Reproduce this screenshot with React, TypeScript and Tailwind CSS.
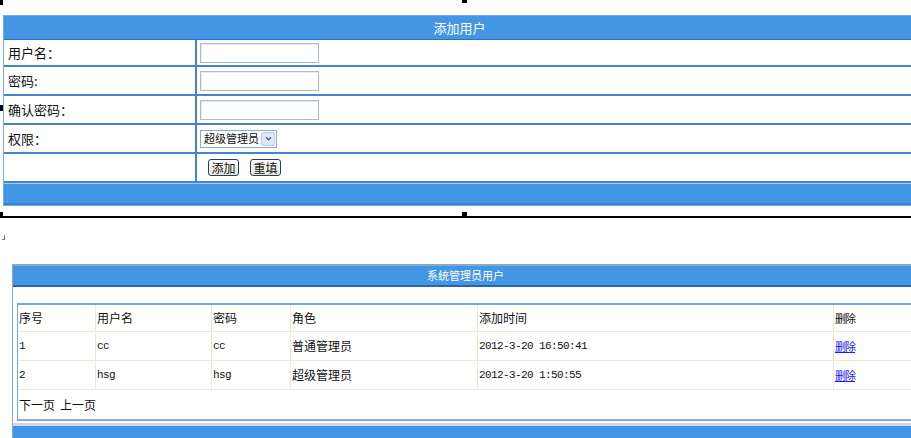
import React from "react";

const cjk = { fontFamily: '"Noto Sans CJK SC", "Noto Sans", sans-serif' };
const mono = { fontFamily: '"Liberation Mono", "Noto Sans CJK SC", monospace' };

function FormRow({ label, h, children }: { label: string; h: string; children?: React.ReactNode }) {
  return (
    <div className={`grid grid-cols-[193px_1fr] border-b-2 border-[#4784ce] ${h}`}>
      <div className="flex items-center border-r-2 border-[#4784ce] pl-[4px] text-[13px] text-[#111]">{label}</div>
      <div className="flex items-center pl-[3px]">{children}</div>
    </div>
  );
}

function TextBox() {
  return <div className="h-[20px] w-[119px] border border-[#a7bbd3] bg-white shadow-[inset_1px_1px_0_#e6ecf3]" />;
}

function Btn({ children }: { children: React.ReactNode }) {
  return (
    <button
      type="button"
      className="flex h-[17px] w-[31px] items-center justify-center rounded-[3px] border border-[#24405f] bg-gradient-to-b from-white to-[#e8e6da] text-[12px] leading-none text-[#111]"
    >
      {children}
    </button>
  );
}

const cols = "grid grid-cols-[78px_116px_79px_187px_356px_1fr]";

function Cell({ children, last, latin }: { children?: React.ReactNode; last?: boolean; latin?: boolean }) {
  return (
    <div
      className={`flex items-center pl-[1px] ${latin ? "text-[11px] tracking-[-0.6px]" : "text-[12px]"} text-[#111] ${last ? "" : "border-r border-[#ece8d8]"}`}
      style={latin ? mono : undefined}
    >
      {children}
    </div>
  );
}

const users = [
  { id: "1", name: "cc", pwd: "cc", role: "普通管理员", time: "2012-3-20 16:50:41" },
  { id: "2", name: "hsg", pwd: "hsg", role: "超级管理员", time: "2012-3-20 1:50:55" },
];

export default function App() {
  return (
    <div className="relative h-[438px] w-[911px] overflow-hidden bg-white" style={cjk}>
      {/* 添加用户 */}
      <div className="pl-[3px] pt-[15px]">
        <div className="w-[913px] border border-[#7aa8e0]">
          <div className="flex h-[24px] items-center justify-center border-b border-[#2f6fbd] bg-[#4396e3] text-[13px] text-white">
            添加用户
          </div>
          <FormRow label="用户名：" h="h-[27px]">
            <TextBox />
          </FormRow>
          <FormRow label="密码:" h="h-[29px]">
            <TextBox />
          </FormRow>
          <FormRow label="确认密码：" h="h-[29px]">
            <TextBox />
          </FormRow>
          <FormRow label="权限：" h="h-[29px]">
            <div className="flex h-[18px] w-[77px] items-center border border-[#8ea9c9] bg-white pl-[3px] pr-[1px]">
              <span className="flex-1 whitespace-nowrap text-[11px] leading-none text-[#111]">超级管理员</span>
              <span className="flex h-[14px] w-[14px] shrink-0 items-center justify-center rounded-[2px] border border-[#b9cbe6] bg-[#dde8f8]">
                <svg viewBox="0 0 8 6" className="h-[5px] w-[7px]">
                  <path d="M1 1.5 4 4.5 7 1.5" fill="none" stroke="#4d6185" strokeWidth="1.6" />
                </svg>
              </span>
            </div>
          </FormRow>
          <FormRow label="" h="h-[29px]">
            <div className="flex gap-[11px] pl-[8px]">
              <Btn>添加</Btn>
              <Btn>重填</Btn>
            </div>
          </FormRow>
          <div className="h-[22px] border-t border-[#a8c8ee] bg-[#4396e3] shadow-[inset_0_-2px_0_#3a82cf]" />
        </div>
      </div>

      {/* 系统管理员用户 */}
      <div className="ml-[12px] mt-[58px] w-[906px] border-l border-t-2 border-[#88a7cc]">
        <div className="flex h-[21px] items-center justify-center border-b-2 border-[#2a64ab] bg-[#4396e3] text-[11px] text-white">
          系统管理员用户
        </div>
        <div className="pl-[4px] pt-[16px]">
          <div className="border-l border-t-2 border-[#7aa6da] border-b-2 border-b-[#8fa9c8]">
            <div className={`${cols} h-[27px] border-b border-[#ece8d8]`}>
              <Cell>序号</Cell>
              <Cell>用户名</Cell>
              <Cell>密码</Cell>
              <Cell>角色</Cell>
              <Cell>添加时间</Cell>
              <Cell last>
                <span className="text-[11px] tracking-[-1px]">删除</span>
              </Cell>
            </div>
            {users.map((u) => (
              <div key={u.id} className={`${cols} h-[29px] border-b border-[#ece8d8]`}>
                <Cell latin>{u.id}</Cell>
                <Cell latin>{u.name}</Cell>
                <Cell latin>{u.pwd}</Cell>
                <Cell>{u.role}</Cell>
                <Cell latin>{u.time}</Cell>
                <Cell last>
                  <a href="#" className="text-[11px] tracking-[-1px] text-[#1a1aff] underline">
                    删除
                  </a>
                </Cell>
              </div>
            ))}
            <div className="flex h-[29px] items-center gap-[5px] pl-[1px] text-[12px] text-[#111]">
              <span>下一页</span>
              <span>上一页</span>
            </div>
          </div>
        </div>
        <div className="mt-[2px] h-[20px] border-t-[3px] border-[#c9d8ea] bg-[#4396e3]" />
      </div>

      {/* design-view selection outline and handles */}
      <div className="absolute left-0 top-[216px] h-[2px] w-full bg-black" />
      <div className="absolute left-0 top-0 h-[5px] w-[3px] bg-black" />
      <div className="absolute left-[462px] top-0 h-[3px] w-[5px] bg-black" />
      <div className="absolute left-0 top-[105px] h-[6px] w-[3px] bg-black" />
      <div className="absolute left-0 top-[212px] h-[5px] w-[3px] bg-black" />
      <div className="absolute left-[462px] top-[212px] h-[5px] w-[5px] bg-black" />
      <div className="absolute left-[2px] top-[235px] h-[5px] w-[3px] border-b border-r border-[#777]" />
    </div>
  );
}
